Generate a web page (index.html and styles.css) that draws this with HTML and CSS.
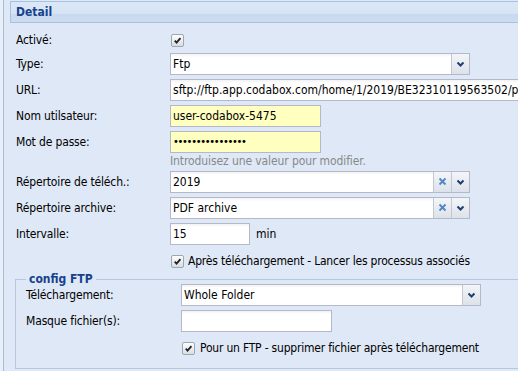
FILE: index.html
```html
<!DOCTYPE html>
<html lang="fr">
<head>
<meta charset="utf-8">
<title>Detail</title>
<link rel="stylesheet" href="styles.css">
</head>
<body>
<div class="frame">
  <div class="strip"></div>
  <div class="panel">
    <div class="panel-header">Detail</div>
    <div class="panel-body">
      <div class="row row-cb-first">
        <label class="lbl">Activé:</label>
        <span class="cb"><svg viewBox="0 0 12 12" width="12" height="12"><path d="M3 6.2 L5 8.4 L9.2 3.4" fill="none" stroke="#222" stroke-width="2"/></svg></span>
      </div>
      <div class="row">
        <label class="lbl">Type:</label>
        <div class="field combo w300">
          <span class="val">Ftp</span>
          <span class="trig"><svg viewBox="0 0 17 20" width="17" height="20"><path d="M5.5 8.5 L8.5 11.5 L11.5 8.5" fill="none" stroke="#1f3f6f" stroke-width="2"/></svg></span>
        </div>
      </div>
      <div class="row">
        <label class="lbl">URL:</label>
        <div class="field wide"><span class="val">sftp://ftp.app.codabox.com/home/1/2019/BE32310119563502/pdf</span></div>
      </div>
      <div class="row">
        <label class="lbl">Nom utilsateur:</label>
        <div class="field yellow w151"><span class="val">user-codabox-5475</span></div>
      </div>
      <div class="row row-tight">
        <label class="lbl">Mot de passe:</label>
        <div class="field yellow w151"><span class="val dots">••••••••••••••••</span></div>
      </div>
      <div class="hint">Introduisez une valeur pour modifier.</div>
      <div class="row">
        <label class="lbl">Répertoire de téléch.:</label>
        <div class="field combo w300">
          <span class="val">2019</span>
          <span class="trig clear"><svg viewBox="0 0 17 20" width="17" height="20"><path d="M5.5 6.5 L11.5 12.5 M11.5 6.5 L5.5 12.5" fill="none" stroke="#4f86c6" stroke-width="1.8"/></svg></span>
          <span class="trig"><svg viewBox="0 0 17 20" width="17" height="20"><path d="M5.5 8.5 L8.5 11.5 L11.5 8.5" fill="none" stroke="#1f3f6f" stroke-width="2"/></svg></span>
        </div>
      </div>
      <div class="row">
        <label class="lbl">Répertoire archive:</label>
        <div class="field combo w300">
          <span class="val">PDF archive</span>
          <span class="trig clear"><svg viewBox="0 0 17 20" width="17" height="20"><path d="M5.5 6.5 L11.5 12.5 M11.5 6.5 L5.5 12.5" fill="none" stroke="#4f86c6" stroke-width="1.8"/></svg></span>
          <span class="trig"><svg viewBox="0 0 17 20" width="17" height="20"><path d="M5.5 8.5 L8.5 11.5 L11.5 8.5" fill="none" stroke="#1f3f6f" stroke-width="2"/></svg></span>
        </div>
      </div>
      <div class="row">
        <label class="lbl">Intervalle:</label>
        <div class="field w80"><span class="val">15</span></div>
        <span class="unit">min</span>
      </div>
      <div class="row row-cb">
        <span class="lbl"></span>
        <span class="cb"><svg viewBox="0 0 12 12" width="12" height="12"><path d="M3 6.2 L5 8.4 L9.2 3.4" fill="none" stroke="#222" stroke-width="2"/></svg></span>
        <span class="cb-text">Après téléchargement - Lancer les processus associés</span>
      </div>
      <fieldset class="fs">
        <legend>config FTP</legend>
        <div class="row row-first">
          <label class="lbl lbl-fs">Téléchargement:</label>
          <div class="field combo w300">
            <span class="val">Whole Folder</span>
            <span class="trig"><svg viewBox="0 0 17 20" width="17" height="20"><path d="M5.5 8.5 L8.5 11.5 L11.5 8.5" fill="none" stroke="#1f3f6f" stroke-width="2"/></svg></span>
          </div>
        </div>
        <div class="row">
          <label class="lbl lbl-fs">Masque fichier(s):</label>
          <div class="field w151"><span class="val"></span></div>
        </div>
        <div class="row row-cb">
          <span class="lbl lbl-fs"></span>
          <span class="cb cb-fs"><svg viewBox="0 0 12 12" width="12" height="12"><path d="M3 6.2 L5 8.4 L9.2 3.4" fill="none" stroke="#222" stroke-width="2"/></svg></span>
          <span class="cb-text cb-text-fs">Pour un FTP - supprimer fichier après téléchargement</span>
        </div>
      </fieldset>
    </div>
  </div>
</div>
</body>
</html>
```

FILE: styles.css
```css
html, body {
  margin: 0;
  padding: 0;
  overflow: hidden;
  background: #dfe8f6;
}

body {
  font-family: "DejaVu Sans Condensed", "DejaVu Sans", sans-serif;
  font-stretch: condensed;
  font-size: 12px;
  color: #000;
  width: 518px;
  height: 371px;
}

.frame {
  display: flex;
  width: 640px;
  height: 371px;
}

.strip {
  width: 3px;
  flex: none;
  background: #e9eff8;
  border-right: 1px solid #a9bcd6;
}

.panel {
  flex: 1;
  padding: 1px 0 0 6px;
}

.panel-header {
  height: 20px;
  line-height: 21px;
  border: 1px solid #a8c1e2;
  border-right: none;
  padding-left: 5px;
  font-weight: bold;
  color: #15428b;
  background: linear-gradient(#dce8f6 0%, #d5e3f4 58%, #c8d9ef 62%, #cedcf0 100%);
}

.panel-body {
  padding: 7px 0 0 6px;
}

.row {
  display: flex;
  align-items: center;
  height: 22px;
  margin-bottom: 4px;
}

.row-cb-first {
  height: 20px;
  margin-bottom: 3px;
}

.row-tight {
  margin-bottom: 0;
}

.row-cb {
  margin-top: 5px;
  margin-bottom: 0;
}

.row-first {
  margin-top: -2px;
}

.lbl {
  width: 154px;
  flex: none;
  letter-spacing: -0.15px;
}

.lbl-fs {
  width: 155px;
}

.field {
  box-sizing: border-box;
  height: 22px;
  border: 1px solid #b5b8c8;
  background: #fff linear-gradient(#f2f2f2, #fff 3px);
  display: flex;
  align-items: stretch;
  flex: none;
}

.field .val {
  flex: 1;
  padding: 0 2px;
  line-height: 20px;
  white-space: nowrap;
  overflow: hidden;
}

.val.dots {
  font-size: 11px;
  letter-spacing: -1.3px;
}

.yellow {
  background: #ffffc0;
}

.w300 { width: 300px; }
.w151 { width: 151px; }
.w80 { width: 80px; }
.wide { width: 460px; }

.trig {
  width: 17px;
  flex: none;
  border-left: 1px solid #c2c7d2;
  background: linear-gradient(#f3f5f8, #dde2ea);
  display: flex;
  align-items: center;
  justify-content: center;
}

.unit {
  margin-left: 6px;
}

.hint {
  margin-left: 154px;
  height: 18px;
  line-height: 16px;
  color: #888;
  letter-spacing: -0.1px;
}

.cb {
  width: 11px;
  height: 11px;
  flex: none;
  border: 1px solid #9ea6b2;
  border-radius: 2px;
  background: linear-gradient(#fdfdfd, #d9dde3);
  display: flex;
  align-items: center;
  justify-content: center;
  margin-left: 1px;
}

.cb svg {
  width: 11px;
  height: 11px;
}

.cb-fs {
  margin-left: 1px;
}

.cb-text {
  margin-left: 4px;
  white-space: nowrap;
  letter-spacing: -0.2px;
}

.cb-text-fs {
  margin-left: 5px;
}

.fs {
  margin: 0 0 0 -1px;
  padding: 0 0 9px 10px;
  border: 1px solid #b5c7df;
  border-right: none;
}

.fs legend {
  padding: 0 3px;
  line-height: 14px;
  font-weight: bold;
  color: #15428b;
}
```
